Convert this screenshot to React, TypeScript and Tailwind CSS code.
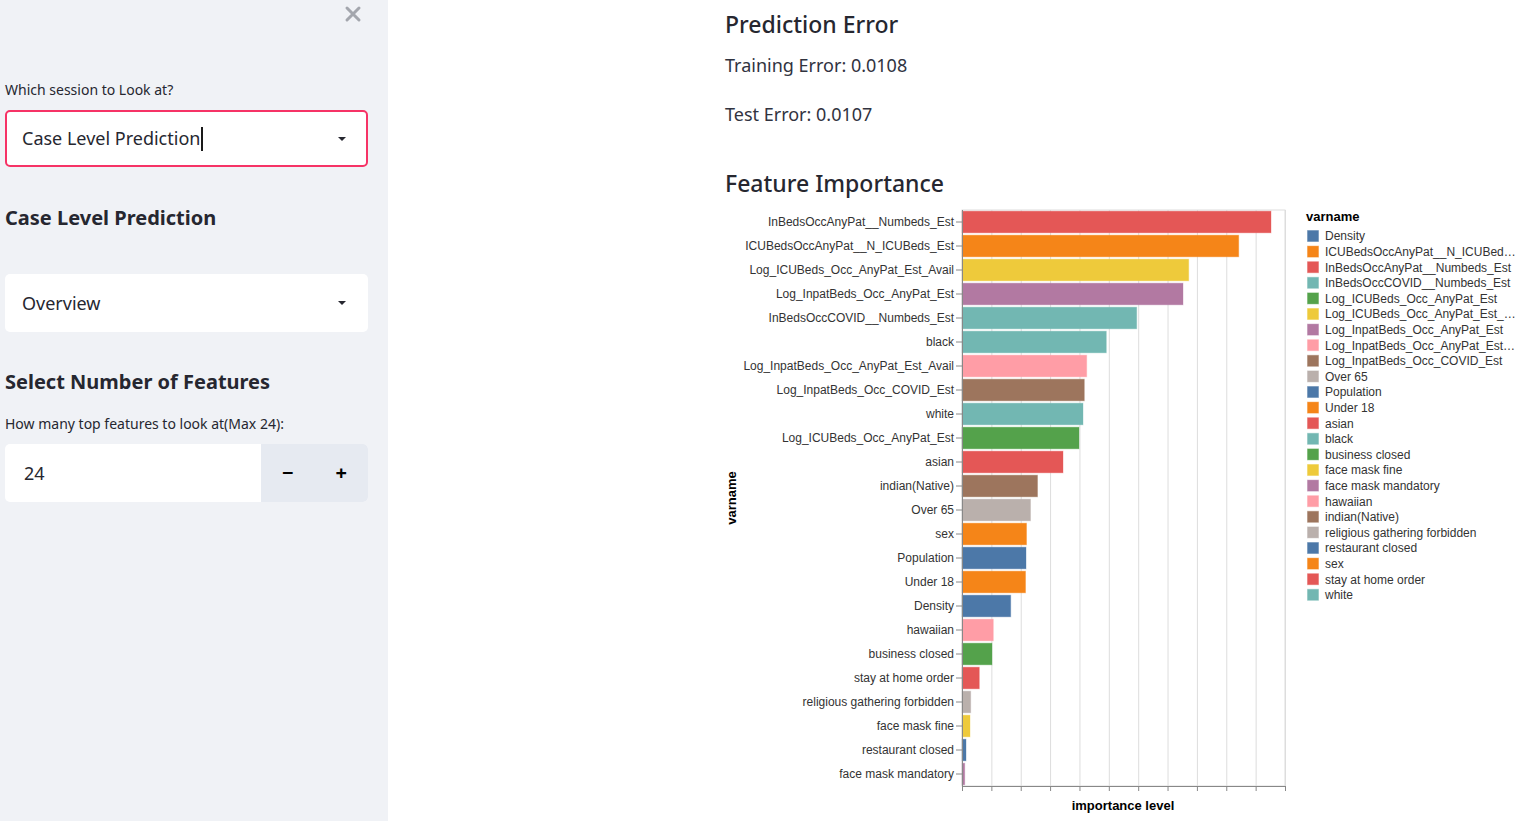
import React from "react";

type Row = { name: string; end: number; color: string };

const C = {
  blue: "#4c78a8",
  orange: "#f58518",
  red: "#e45756",
  teal: "#72b7b2",
  green: "#54a24b",
  yellow: "#eeca3b",
  purple: "#b279a2",
  pink: "#ff9da6",
  brown: "#9d755d",
  gray: "#bab0ac",
};

const rows: Row[] = [
  { name: "InBedsOccAnyPat__Numbeds_Est", end: 1271, color: C.red },
  { name: "ICUBedsOccAnyPat__N_ICUBeds_Est", end: 1238.7, color: C.orange },
  { name: "Log_ICUBeds_Occ_AnyPat_Est_Avail", end: 1188.7, color: C.yellow },
  { name: "Log_InpatBeds_Occ_AnyPat_Est", end: 1183, color: C.purple },
  { name: "InBedsOccCOVID__Numbeds_Est", end: 1136.7, color: C.teal },
  { name: "black", end: 1106.3, color: C.teal },
  { name: "Log_InpatBeds_Occ_AnyPat_Est_Avail", end: 1086.7, color: C.pink },
  { name: "Log_InpatBeds_Occ_COVID_Est", end: 1084.3, color: C.brown },
  { name: "white", end: 1083, color: C.teal },
  { name: "Log_ICUBeds_Occ_AnyPat_Est", end: 1079, color: C.green },
  { name: "asian", end: 1063, color: C.red },
  { name: "indian(Native)", end: 1037.5, color: C.brown },
  { name: "Over 65", end: 1030.5, color: C.gray },
  { name: "sex", end: 1026.5, color: C.orange },
  { name: "Population", end: 1026, color: C.blue },
  { name: "Under 18", end: 1025.5, color: C.orange },
  { name: "Density", end: 1010.7, color: C.blue },
  { name: "hawaiian", end: 993.3, color: C.pink },
  { name: "business closed", end: 992, color: C.green },
  { name: "stay at home order", end: 979.3, color: C.red },
  { name: "religious gathering forbidden", end: 970.7, color: C.gray },
  { name: "face mask fine", end: 970, color: C.yellow },
  { name: "restaurant closed", end: 966, color: C.blue },
  { name: "face mask mandatory", end: 964.7, color: C.purple },
];

const legend: [string, string][] = [
  ["Density", C.blue],
  ["ICUBedsOccAnyPat__N_ICUBed…", C.orange],
  ["InBedsOccAnyPat__Numbeds_Est", C.red],
  ["InBedsOccCOVID__Numbeds_Est", C.teal],
  ["Log_ICUBeds_Occ_AnyPat_Est", C.green],
  ["Log_ICUBeds_Occ_AnyPat_Est_…", C.yellow],
  ["Log_InpatBeds_Occ_AnyPat_Est", C.purple],
  ["Log_InpatBeds_Occ_AnyPat_Est…", C.pink],
  ["Log_InpatBeds_Occ_COVID_Est", C.brown],
  ["Over 65", C.gray],
  ["Population", C.blue],
  ["Under 18", C.orange],
  ["asian", C.red],
  ["black", C.teal],
  ["business closed", C.green],
  ["face mask fine", C.yellow],
  ["face mask mandatory", C.purple],
  ["hawaiian", C.pink],
  ["indian(Native)", C.brown],
  ["religious gathering forbidden", C.gray],
  ["restaurant closed", C.blue],
  ["sex", C.orange],
  ["stay at home order", C.red],
  ["white", C.teal],
];

const X0 = 962;
const X1 = 1285;
const TOP = 210;
const STEP = 24;
const BOTTOM = TOP + STEP * rows.length;
const grid = Array.from({ length: 12 }, (_, i) => X0 + ((X1 - X0) / 11) * i);

function Caret() {
  return (
    <svg width="10" height="6" viewBox="0 0 10 6" className="shrink-0">
      <path d="M1 1h8L5 5z" fill="#262730" />
    </svg>
  );
}

function Chart() {
  const font = { fontFamily: "'Liberation Sans', Arial, sans-serif" };
  return (
    <svg width="810" height="621" viewBox="720 200 810 621" className="-ml-[5px] block" style={font}>
      <rect x={X0} y={TOP} width={X1 - X0} height={BOTTOM - TOP} fill="none" stroke="#ddd" />
      {grid.map((g, i) => (
        <line key={i} x1={g + 0.5} x2={g + 0.5} y1={TOP} y2={BOTTOM} stroke="#ddd" />
      ))}
      {rows.map((r, i) => {
        const y = TOP + i * STEP + 1.2;
        return (
          <g key={r.name}>
            <rect x={X0} y={y} width={r.end - X0} height={21.6} fill={r.color} stroke={r.color} strokeOpacity={0.35} strokeWidth={1} />
            <line x1={956} x2={962} y1={y + 10.8} y2={y + 10.8} stroke="#888" />
            <text x={954} y={y + 15} textAnchor="end" fontSize="12" fill="#333">
              {r.name}
            </text>
          </g>
        );
      })}
      <line x1={X0 + 0.5} x2={X0 + 0.5} y1={TOP} y2={BOTTOM} stroke="#888" />
      <line x1={X0} x2={X1 + 1} y1={BOTTOM + 0.5} y2={BOTTOM + 0.5} stroke="#888" />
      {grid.map((g, i) => (
        <line key={i} x1={g + 0.5} x2={g + 0.5} y1={BOTTOM} y2={BOTTOM + 5} stroke="#888" />
      ))}
      <text x={1123} y={810} textAnchor="middle" fontSize="13" fontWeight="bold" fill="#000">
        importance level
      </text>
      <text transform="translate(736 498) rotate(-90)" textAnchor="middle" fontSize="13" fontWeight="bold" fill="#000">
        varname
      </text>
      <text x={1306} y={221} fontSize="13" fontWeight="bold" fill="#000">
        varname
      </text>
      {legend.map(([label, color], i) => {
        const cy = 236 + i * 15.6;
        return (
          <g key={label + i}>
            <rect x={1307.5} y={cy - 5.5} width={11} height={11} fill={color} stroke={color} strokeOpacity={0.4} />
            <text x={1325} y={cy + 4.3} fontSize="12" fill="#333">
              {label}
            </text>
          </g>
        );
      })}
    </svg>
  );
}

export default function App() {
  return (
    <div className="flex h-screen w-full overflow-hidden bg-white text-[#262730]" style={{ fontFamily: "'Noto Sans', 'Open Sans', sans-serif" }}>
      <aside className="w-[388px] shrink-0 bg-[#f0f2f6] pl-[5px] pr-[20px]">
        <div className="flex h-[28px] items-center justify-end pr-[5px]">
          <svg width="18" height="18" viewBox="0 0 18 18" className="mr-[1px]">
            <path d="M3 3l12 12M15 3L3 15" stroke="#a3a6ad" strokeWidth="3" strokeLinecap="round" />
          </svg>
        </div>
        <div className="mt-[52px] text-[14px] leading-[20px]">Which session to Look at?</div>
        <div className="mt-[10px] flex h-[57px] items-center rounded-[5px] border-2 border-[#f63366] bg-white pl-[15px] pr-[19px]">
          <span className="text-[18px] text-[#262730]">Case Level Prediction</span>
          <span className="ml-[1px] h-[24px] w-[2px] bg-[#1a1a1a]" />
          <span className="flex-1" />
          <Caret />
        </div>
        <h3 className="mt-[37px] text-[20px] font-bold leading-[28px]">Case Level Prediction</h3>
        <div className="mt-[42px] flex h-[58px] items-center rounded-[5px] bg-white pl-[17px] pr-[21px]">
          <span className="text-[18px]">Overview</span>
          <span className="flex-1" />
          <Caret />
        </div>
        <h3 className="mt-[36px] text-[20px] font-bold leading-[28px]">Select Number of Features</h3>
        <div className="mt-[18px] text-[14px] leading-[20px]">How many top features to look at(Max 24):</div>
        <div className="mt-[10px] flex h-[58px] overflow-hidden rounded-[5px] bg-white">
          <div className="flex flex-1 items-center pl-[19px] text-[18px]">24</div>
          <div className="flex w-[107px] bg-[#e6eaf1]">
            <button className="flex flex-1 items-center justify-center text-[20px] font-bold leading-none text-[#000]">−</button>
            <button className="flex flex-1 items-center justify-center text-[20px] font-bold leading-none text-[#000]">+</button>
          </div>
        </div>
      </aside>
      <main className="flex-1 pl-[337px]">
        <h2 className="mt-[8px] text-[23px] font-medium leading-[32px]">Prediction Error</h2>
        <p className="mt-[11px] text-[18px] leading-[28px] text-[#31333f]">Training Error: 0.0108</p>
        <p className="mt-[21px] text-[18px] leading-[28px] text-[#31333f]">Test Error: 0.0107</p>
        <h2 className="mt-[39px] text-[23px] font-medium leading-[32px]">Feature Importance</h2>
        <div className="mt-[1px]">
          <Chart />
        </div>
      </main>
    </div>
  );
}
